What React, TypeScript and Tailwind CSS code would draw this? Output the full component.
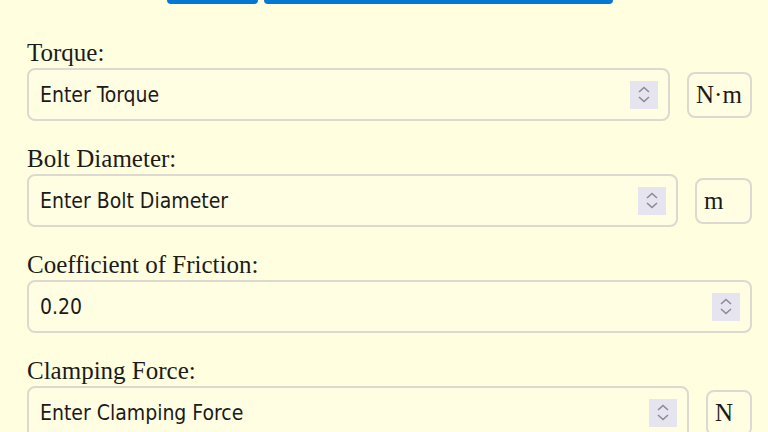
import { useState } from 'react';

type Field = {
  id: string;
  label: string;
  placeholder?: string;
  value?: string;
  unit?: string;
  unitWidth?: string;
};

const fields: Field[] = [
  { id: 'torque', label: 'Torque:', placeholder: 'Enter Torque', unit: 'N·m', unitWidth: 'w-[65px]' },
  { id: 'diameter', label: 'Bolt Diameter:', placeholder: 'Enter Bolt Diameter', unit: 'm', unitWidth: 'w-[57px]' },
  { id: 'friction', label: 'Coefficient of Friction:', value: '0.20' },
  { id: 'clamping', label: 'Clamping Force:', placeholder: 'Enter Clamping Force', unit: 'N', unitWidth: 'w-[46px]' }
];

const serif = "font-['Liberation_Serif','Times_New_Roman',serif]";
const inputFont = "font-['DejaVu_Sans_Condensed','DejaVu_Sans',sans-serif]";

function Spinner() {
  return (
    <div className="pointer-events-none absolute right-[12px] top-1/2 flex h-[28px] w-[28px] -translate-y-1/2 flex-col items-center justify-center gap-[3px] bg-[#e6e5ef]">
      <svg width="12" height="7" viewBox="0 0 12 7" fill="none">
        <path d="M1 6L6 1.5L11 6" stroke="#8b8a95" strokeWidth="1.6" />
      </svg>
      <svg width="12" height="7" viewBox="0 0 12 7" fill="none">
        <path d="M1 1L6 5.5L11 1" stroke="#8b8a95" strokeWidth="1.6" />
      </svg>
    </div>
  );
}

function FieldRow({ field }: { field: Field }) {
  const [value, setValue] = useState(field.value ?? '');

  return (
    <div className="flex flex-col">
      <label htmlFor={field.id} className={`${serif} h-[30px] text-[25px] leading-[30px] text-[#1b1b1b]`}>
        {field.label}
      </label>
      <div className="flex items-center gap-[17px]">
        <div className="relative min-w-0 flex-1">
          <input
            id={field.id}
            type="text"
            value={value}
            placeholder={field.placeholder}
            onChange={(e) => setValue(e.target.value)}
            className={`${inputFont} h-[53px] w-full rounded-[8px] border-2 border-[#dcdad0] bg-[#fffee2] pl-[11px] pr-[50px] text-[21px] text-[#1b1b1b] outline-none placeholder:text-[#1b1b1b]`}
          />
          <Spinner />
        </div>
        {field.unit && (
          <div
            className={`${serif} ${field.unitWidth} flex h-[46px] shrink-0 items-center rounded-[8px] border-2 border-[#dcdad0] bg-[#fffee2] pl-[7px] text-[25px] leading-none text-[#1b1b1b]`}
          >
            {field.unit}
          </div>
        )}
      </div>
    </div>
  );
}

export default function App() {
  return (
    <div className="h-[432px] w-[768px] overflow-hidden bg-[#ffffdf]">
      <div className="-mt-[36px] flex justify-center gap-[6px] pl-[12px]">
        <button
          type="button"
          className="h-[40px] w-[91px] rounded-[4px] bg-[#0078d4] text-[18px] text-white"
        >
          Reset
        </button>
        <button
          type="button"
          className="h-[40px] w-[349px] rounded-[4px] bg-[#0078d4] text-[18px] text-white"
        >
          Calculate Clamping Force
        </button>
      </div>
      <div className="flex flex-col gap-[23px] pl-[27px] pr-[16px] pt-[34px]">
        {fields.map((field) => (
          <FieldRow key={field.id} field={field} />
        ))}
      </div>
    </div>
  );
}
